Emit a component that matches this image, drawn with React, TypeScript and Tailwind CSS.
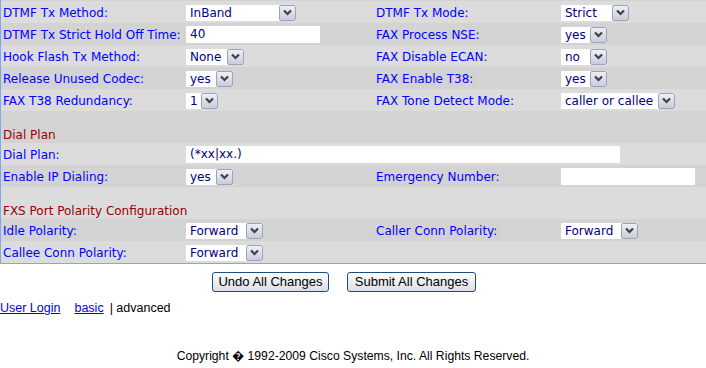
import React from "react";

const LIGHT = "bg-[#dcdcdc]";
const DARK = "bg-[#d3d3d3]";

function Chevron() {
  return (
    <svg width="9" height="7" viewBox="0 0 9 7" className="block">
      <polyline points="1,1.5 4.5,5 8,1.5" fill="none" stroke="#404040" strokeWidth="2.2" />
    </svg>
  );
}

function Select({ value, width }: { value: string; width: string }) {
  return (
    <div className={`flex h-[16px] items-stretch bg-white ${width}`}>
      <span className="flex-1 pl-[4px] text-[12px] leading-[16px] text-[#000080] whitespace-nowrap overflow-hidden">{value}</span>
      <span className="flex w-[17px] items-center justify-center rounded-[2px] border border-[#9ea3b8] bg-gradient-to-b from-[#eef0f6] to-[#c8ccdc]">
        <Chevron />
      </span>
    </div>
  );
}

function TextBox({ value, width }: { value?: string; width: string }) {
  return (
    <div className={`h-[17px] bg-white pl-[4px] text-[12px] leading-[17px] text-[#000080] ${width}`}>{value}</div>
  );
}

function Row({ bg, l1, v1, l2, v2 }: { bg: string; l1: string; v1: React.ReactNode; l2?: string; v2?: React.ReactNode }) {
  return (
    <div className={`grid h-[22px] grid-cols-[185px_190px_185px_1fr] items-center pt-[1px] ${bg}`}>
      <div className="pl-[2px] text-[#0000ff] whitespace-nowrap">{l1}</div>
      <div>{v1}</div>
      <div className="text-[#0000ff] whitespace-nowrap">{l2}</div>
      <div>{v2}</div>
    </div>
  );
}

function Header({ bg, title }: { bg: string; title: string }) {
  return (
    <div className={`flex h-[32px] items-end pl-[2px] text-[#990000] ${bg}`}>
      <span className="leading-[15px]">{title}</span>
    </div>
  );
}

export default function App() {
  return (
    <div className="h-[368px] w-[706px] overflow-hidden bg-white">
      {/* settings table */}
      <div className="border-b border-l border-[#80a8e2] text-[12px] font-['DejaVu_Sans',Verdana,sans-serif]">
        <div className={`h-[1px] ${DARK}`} />
        <Row bg={LIGHT} l1="DTMF Tx Method:" v1={<Select value="InBand" width="w-[110px]" />} l2="DTMF Tx Mode:" v2={<Select value="Strict" width="w-[68px]" />} />
        <Row bg={DARK} l1="DTMF Tx Strict Hold Off Time:" v1={<TextBox value="40" width="w-[134px]" />} l2="FAX Process NSE:" v2={<Select value="yes" width="w-[46px]" />} />
        <Row bg={LIGHT} l1="Hook Flash Tx Method:" v1={<Select value="None" width="w-[58px]" />} l2="FAX Disable ECAN:" v2={<Select value="no" width="w-[46px]" />} />
        <Row bg={DARK} l1="Release Unused Codec:" v1={<Select value="yes" width="w-[47px]" />} l2="FAX Enable T38:" v2={<Select value="yes" width="w-[46px]" />} />
        <Row bg={LIGHT} l1="FAX T38 Redundancy:" v1={<Select value="1" width="w-[32px]" />} l2="FAX Tone Detect Mode:" v2={<Select value="caller or callee" width="w-[114px]" />} />

        <Header bg={DARK} title="Dial Plan" />
        <div className={`flex h-[22px] items-center pt-[1px] ${LIGHT}`}>
          <div className="w-[185px] pl-[2px] text-[#0000ff]">Dial Plan:</div>
          <TextBox value="(*xx|xx.)" width="w-[434px]" />
        </div>
        <Row bg={DARK} l1="Enable IP Dialing:" v1={<Select value="yes" width="w-[47px]" />} l2="Emergency Number:" v2={<TextBox width="w-[134px]" />} />

        <Header bg={LIGHT} title="FXS Port Polarity Configuration" />
        <Row bg={DARK} l1="Idle Polarity:" v1={<Select value="Forward" width="w-[77px]" />} l2="Caller Conn Polarity:" v2={<Select value="Forward" width="w-[77px]" />} />
        <Row bg={LIGHT} l1="Callee Conn Polarity:" v1={<Select value="Forward" width="w-[77px]" />} />
      </div>

      {/* actions */}
      <div className="mt-[8px] flex justify-center gap-[18px] pr-[18px] font-['Liberation_Sans',Arial,sans-serif] text-[13px]">
        <button className="h-[20px] w-[117px] rounded-[3px] border border-[#1c4f7e] bg-gradient-to-b from-white to-[#dcdce4] leading-[18px] text-black">Undo All Changes</button>
        <button className="h-[20px] w-[129px] rounded-[3px] border border-[#1c4f7e] bg-gradient-to-b from-white to-[#dcdce4] leading-[18px] text-black">Submit All Changes</button>
      </div>

      <div className="mt-[8px] flex font-['Liberation_Sans',Arial,sans-serif] text-[12.5px] leading-[16px]">
        <a className="text-[#0000ee] underline">User Login</a>
        <a className="ml-[14px] text-[#0000ee] underline">basic</a>
        <span className="ml-[6px] text-black">| advanced</span>
      </div>

      <div className="mt-[32px] text-center font-['Liberation_Sans',Arial,sans-serif] text-[12.2px] leading-[16px] text-black">
        Copyright {"\uFFFD"} 1992-2009 Cisco Systems, Inc. All Rights Reserved.
      </div>
    </div>
  );
}
